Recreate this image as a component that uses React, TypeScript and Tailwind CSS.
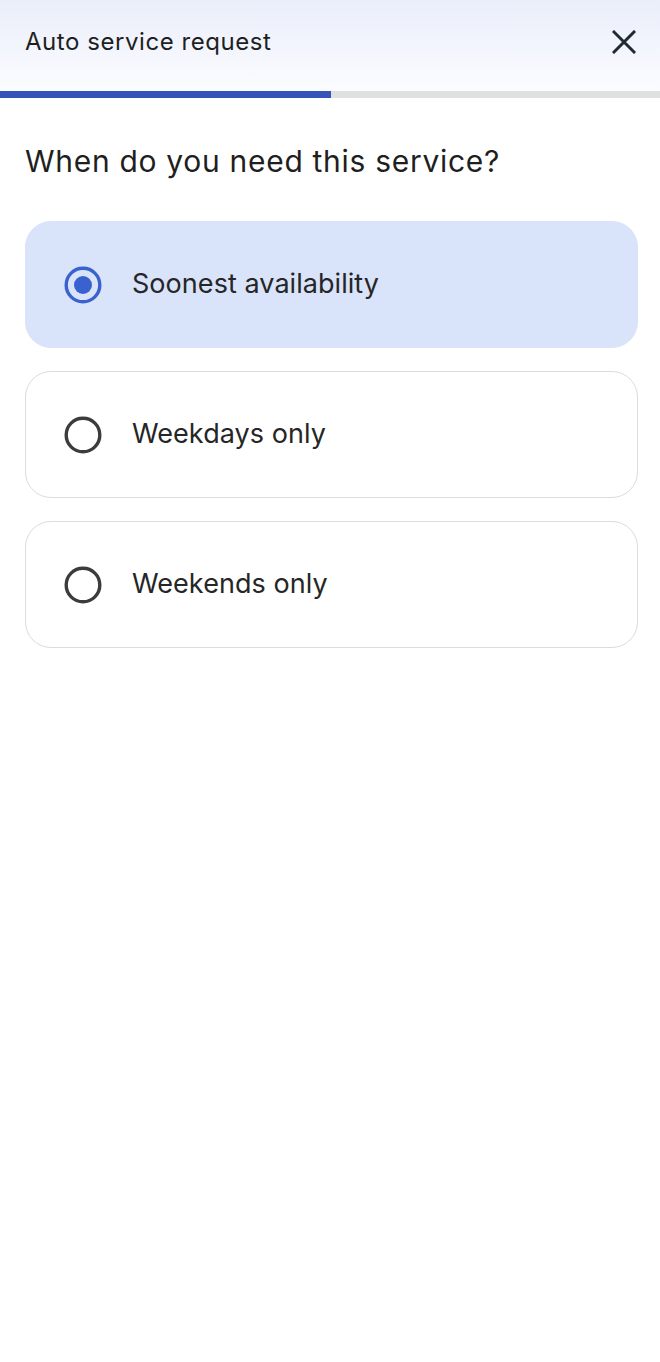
import React from "react";

function Radio({ checked }: { checked: boolean }) {
  return (
    <svg width="38" height="38" viewBox="0 0 38 38" className="shrink-0">
      <circle cx="19" cy="19" r="16.8" fill="none" stroke={checked ? "#3a62cf" : "#3c3c3c"} strokeWidth="3.4" />
      {checked && <circle cx="19" cy="19" r="9" fill="#3a62cf" />}
    </svg>
  );
}

function Option({ label, checked }: { label: string; checked: boolean }) {
  return (
    <div
      className={
        "flex items-center h-[127px] rounded-[26px] pl-[38px] gap-[30px] " +
        (checked ? "bg-[#d9e3fa] border border-[#d9e3fa]" : "bg-white border border-[#dcdcdc]")
      }
    >
      <Radio checked={checked} />
      <span className="text-[27px] text-[#262626] tracking-[0.05px]">{label}</span>
    </div>
  );
}

export default function App() {
  return (
    <div className="w-[660px] h-[1362px] bg-white" style={{ fontFamily: "Inter, Roboto, sans-serif" }}>
      <div className="bg-gradient-to-b from-[#eaeefa] to-[#fbfcff] h-[91px] flex items-center justify-between pl-[25px] pr-[24px] pb-[7px]">
        <span className="text-[24px] text-[#1f1f1f] tracking-[0.55px]">Auto service request</span>
        <svg width="24" height="24" viewBox="0 0 24 24">
          <path d="M2 2 L22 22 M22 2 L2 22" stroke="#1f2a33" strokeWidth="3" strokeLinecap="square" />
        </svg>
      </div>
      <div className="flex h-[7px] bg-[#e0e0e0]">
        <div className="w-[331px] bg-[#3553b8]" />
      </div>
      <div className="px-[25px] pr-[22px]">
        <h1 className="text-[30px] text-[#1f1f1f] mt-[44px] mb-[41px] leading-[38px] tracking-[0.7px]">When do you need this service?</h1>
        <div className="flex flex-col gap-[23px]">
          <Option label="Soonest availability" checked />
          <Option label="Weekdays only" checked={false} />
          <Option label="Weekends only" checked={false} />
        </div>
      </div>
    </div>
  );
}
